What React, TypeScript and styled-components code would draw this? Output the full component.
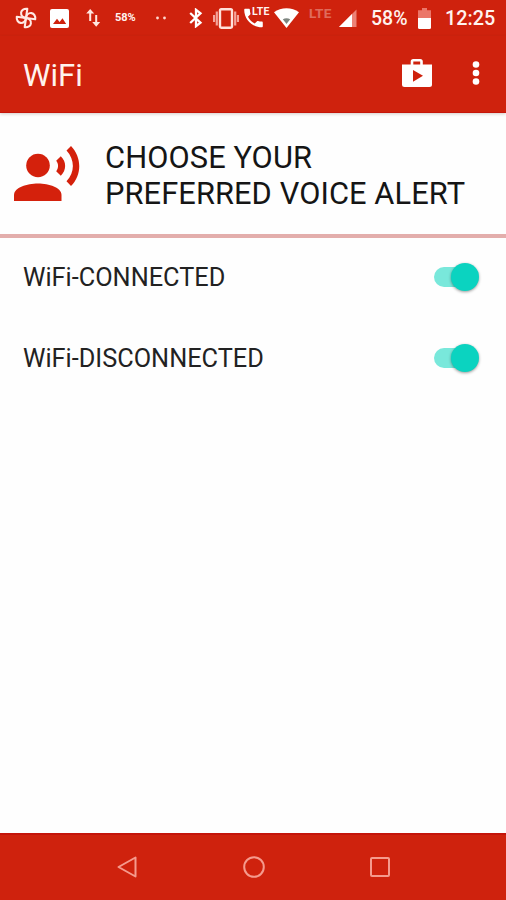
import React from "react";
import styled, { createGlobalStyle } from "styled-components";

const RED = "#cf220d";

const GlobalStyle = createGlobalStyle`
  * { box-sizing: border-box; }
  body { margin: 0; background: #fefefe; font-family: Roboto, "Noto Sans", sans-serif; }
`;

const Screen = styled.div`
  display: flex;
  flex-direction: column;
  width: 506px;
  height: 900px;
  overflow: hidden;
  background: #fefefe;
`;

const StatusBar = styled.header`
  display: flex;
  align-items: flex-start;
  flex: none;
  height: 36px;
  background: ${RED};
  color: #fff3ef;
`;

const StatusSlot = styled.div<{ $gap: number; $width: number }>`
  display: flex;
  align-items: center;
  flex: none;
  height: 36px;
  width: ${(p) => p.$width}px;
  margin-left: ${(p) => p.$gap}px;
  svg { display: block; flex: none; }
`;

const StatusText = styled.span<{ $size: number; $weight?: number; $spacing?: number; $faint?: boolean; $lift?: number; $drop?: number }>`
  font-size: ${(p) => p.$size}px;
  line-height: 20px;
  font-weight: ${(p) => p.$weight ?? 500};
  letter-spacing: ${(p) => p.$spacing ?? 0}px;
  opacity: ${(p) => (p.$faint ? 0.35 : 1)};
  margin-bottom: ${(p) => p.$lift ?? 0}px;
  margin-top: ${(p) => p.$drop ?? 0}px;
  white-space: nowrap;
`;

const CallSlot = styled(StatusSlot)`
  position: relative;
`;

const CallBadge = styled.span`
  position: absolute;
  left: 8px;
  top: 6px;
  font-size: 10.5px;
  line-height: 12px;
  font-weight: 700;
  letter-spacing: 0.3px;
`;

const AppBar = styled.div`
  display: flex;
  align-items: center;
  flex: none;
  height: 77px;
  padding: 0 20px 3px 23px;
  background: ${RED};
  border-bottom: 1px solid #c6150a;
  box-shadow: 0 1px 3px rgba(90, 60, 40, 0.25);
`;

const Title = styled.h1`
  flex: 1;
  margin: 0;
  padding-top: 6px;
  font-size: 31px;
  line-height: 36px;
  font-weight: 400;
  color: #fff3ed;
`;

const IconButton = styled.button<{ $width: number; $gap?: number }>`
  display: flex;
  justify-content: center;
  width: ${(p) => p.$width}px;
  margin: 0 0 0 ${(p) => p.$gap ?? 0}px;
  padding: 0;
  border: 0;
  background: none;
  svg { display: block; }
`;

const Banner = styled.section`
  display: flex;
  align-items: flex-start;
  flex: none;
  height: 125px;
  padding: 27px 0 0 14px;
  border-bottom: 4px solid #e3aeac;
  svg { display: block; flex: none; margin-top: 5px; }
`;

const Heading = styled.h2`
  margin: 0 0 0 25px;
  font-size: 30.8px;
  line-height: 36px;
  font-weight: 400;
  letter-spacing: 0.09px;
  color: #151515;
  white-space: nowrap;
`;

const Settings = styled.main`
  flex: 1;
`;

const Row = styled.label`
  display: flex;
  align-items: center;
  justify-content: space-between;
  height: 80.5px;
  padding: 0 27px 2px 23px;
`;

const RowLabel = styled.span`
  padding-top: 2px;
  font-size: 25.3px;
  line-height: 30px;
  color: #222;
`;

const Track = styled.span`
  display: flex;
  align-items: center;
  justify-content: flex-end;
  width: 45px;
  height: 20px;
  border-radius: 10px;
  background: linear-gradient(#79e8db, #79e8db) left / 36px 100% no-repeat;
`;

const Thumb = styled.span`
  width: 28px;
  height: 28px;
  flex: none;
  border-radius: 50%;
  background: #0bd3c0;
  box-shadow: 0 1px 3px rgba(0, 0, 0, 0.4);
`;

const NavBar = styled.nav`
  display: flex;
  justify-content: space-between;
  flex: none;
  height: 67px;
  padding: 21px 115px 0 116px;
  background: ${RED};
  border-top: 2px solid #c4140a;
  svg { display: block; fill: none; stroke: #f59a8d; stroke-width: 2; }
`;

function Toggle() {
  return <Track><Thumb /></Track>;
}

const ALERTS = ["WiFi-CONNECTED", "WiFi-DISCONNECTED"];

export default function App() {
  return (
    <>
      <GlobalStyle />
      <Screen>
        <StatusBar>
          <StatusSlot $gap={15} $width={22}>
            <svg width="22" height="22" viewBox="-11 -11 22 22" fill="none" stroke="#ffe9e4" strokeWidth="2.1" strokeLinejoin="round">
              {[0, 90, 180, 270].map((a) => (
                <path key={a} transform={`rotate(${a + 8})`} d="M0 0V-9.3C-3.4 -9.3 -5.6 -7.2 -5.6 -4.8C-5.6 -1.8 -3 0 0 0Z" />
              ))}
            </svg>
          </StatusSlot>
          <StatusSlot $gap={13} $width={19}>
            <svg width="19" height="19" viewBox="0 0 19 19">
              <rect width="19" height="19" rx="2" fill="#fff" />
              <path d="M3 15L7 9.7L9.6 13L12.5 9.3L16.2 15Z" fill={RED} />
            </svg>
          </StatusSlot>
          <StatusSlot $gap={17} $width={15}>
            <svg width="15" height="20" viewBox="0 0 15 20" fill="none" stroke="#ffe6df" strokeWidth="2">
              <path d="M4.2 13V3M10.2 7V17" />
              <path d="M.2 5.5L4.2 1L8.2 5.5ZM6.2 14L10.2 18.7L14.2 14Z" fill="#ffe6df" stroke="none" />
            </svg>
          </StatusSlot>
          <StatusSlot $gap={14} $width={24}>
            <StatusText $size={11} $weight={700} $spacing={-0.1}>58%</StatusText>
          </StatusSlot>
          <StatusSlot $gap={15} $width={14}>
            <svg width="14" height="4" viewBox="0 0 14 4" fill="#ffd9cf">
              <circle cx="3.5" cy="2" r="1.4" /><circle cx="10.5" cy="2" r="1.4" />
            </svg>
          </StatusSlot>
          <StatusSlot $gap={21} $width={14}>
            <svg width="14" height="20" viewBox="0 0 14 20" fill="none" stroke="#fff" strokeWidth="2.3">
              <path d="M1.2 5L11.5 14.6L7 18.2V1.8L11.5 5.4L1.2 15" />
            </svg>
          </StatusSlot>
          <StatusSlot $gap={10} $width={26}>
            <svg width="26" height="21" viewBox="0 0 26 21" fill="none">
              <rect x="7" y="1.2" width="12" height="18.6" rx="1.3" stroke="#ffe0d9" strokeWidth="2.4" />
              <path d="M3.8 3.5V17.5M22.2 3.5V17.5M1 7V14M25 7V14" stroke="#f4a49a" strokeWidth="2.2" />
            </svg>
          </StatusSlot>
          <CallSlot $gap={5} $width={27}>
            <svg width="19" height="20" viewBox="2.8 2.8 18.4 18.4" fill="#fff">
              <path d="M6.62 10.79c1.44 2.83 3.76 5.14 6.59 6.59l2.2-2.2c.27-.27.67-.36 1.02-.24 1.12.37 2.33.57 3.57.57.55 0 1 .45 1 1V20c0 .55-.45 1-1 1C10.61 21 3 13.39 3 4c0-.55.45-1 1-1h3.5c.55 0 1 .45 1 1 0 1.25.2 2.45.57 3.57.11.35.03.74-.25 1.02l-2.2 2.2z" />
            </svg>
            <CallBadge>LTE</CallBadge>
          </CallSlot>
          <StatusSlot $gap={3} $width={25}>
            <svg width="25" height="20" viewBox="0 0 25 20">
              <path d="M0 4.2C7 -1.2 18 -1.2 25 4.2L12.5 20Z" fill="#fff" />
              <path d="M8.8 11.2Q12.5 9.4 16.2 11.2L12.5 16Z" fill="#7d8580" />
            </svg>
          </StatusSlot>
          <StatusSlot $gap={10} $width={25}>
            <StatusText $size={13.5} $weight={700} $faint $lift={10} $spacing={0.3}>LTE</StatusText>
          </StatusSlot>
          <StatusSlot $gap={5} $width={18}>
            <svg width="18" height="18" viewBox="0 0 18 18">
              <path d="M0 18L17.5 .5V18Z" fill="#ec8276" />
              <path d="M0 18L13 5V18Z" fill="#fff" />
            </svg>
          </StatusSlot>
          <StatusSlot $gap={14} $width={38}>
            <StatusText $size={19.5} $weight={500} $drop={2}>58%</StatusText>
          </StatusSlot>
          <StatusSlot $gap={9} $width={13}>
            <svg width="13" height="21" viewBox="0 0 13 21">
              <path d="M4 0H9V2.3H13V10H0V2.3H4Z" fill="#eb7769" />
              <path d="M0 10H13V19.5Q13 21 11.5 21H1.5Q0 21 0 19.5Z" fill="#fff" />
            </svg>
          </StatusSlot>
          <StatusSlot $gap={14} $width={52}>
            <StatusText $size={19.8} $weight={500} $drop={2}>12:25</StatusText>
          </StatusSlot>
        </StatusBar>
        <AppBar>
          <Title>WiFi</Title>
          <IconButton $width={30} aria-label="Store">
            <svg width="30" height="28" viewBox="0 0 30 28">
              <path d="M10 6V2.6Q10 1.3 11.3 1.3H18.2Q19.5 1.3 19.5 2.6V6" fill="none" stroke="#fff" strokeWidth="2.6" />
              <path d="M0 5.6H30V25.5Q30 28 27.5 28H2.5Q0 28 0 25.5Z" fill="#fff" />
              <path d="M11 11L21 16.8L11 22.7Z" fill={RED} />
            </svg>
          </IconButton>
          <IconButton $width={20} $gap={34} aria-label="More options">
            <svg width="8" height="24" viewBox="0 0 8 24" fill="#fff">
              <circle cx="4" cy="3.5" r="3.3" /><circle cx="4" cy="12" r="3.3" /><circle cx="4" cy="20.5" r="3.3" />
            </svg>
          </IconButton>
        </AppBar>
        <Banner>
          <svg width="66" height="56" viewBox="0 0 66 56" fill="#d4210c">
            <circle cx="24" cy="20.5" r="11.8" />
            <path d="M0 56V50C0 42.5 13 38.5 24 38.5S47.5 42.5 47.5 50V56Z" />
            <path d="M46.8 11.2L42.2 15.8C44.7 19 44.7 23 42.2 26.2L46.8 30.8C52.6 25.2 52.6 16.6 46.8 11.2Z" />
            <path d="M57 1L52.5 5.5C61 14.8 61 27 52.5 36.3L57 41C68 29.8 68 12.6 57 1Z" />
          </svg>
          <Heading>CHOOSE YOUR<br />PREFERRED VOICE ALERT</Heading>
        </Banner>
        <Settings>
          {ALERTS.map((name) => (
            <Row key={name}>
              <RowLabel>{name}</RowLabel>
              <Toggle />
            </Row>
          ))}
        </Settings>
        <NavBar>
          <svg width="22" height="22" viewBox="0 0 22 22"><path d="M19.5 1.5V20.5L2.5 11Z" strokeLinejoin="round" /></svg>
          <svg width="22" height="22" viewBox="0 0 22 22"><circle cx="11" cy="11" r="9.8" /></svg>
          <svg width="22" height="22" viewBox="0 0 22 22"><rect x="2" y="2" width="18" height="18" rx="1" /></svg>
        </NavBar>
      </Screen>
    </>
  );
}
